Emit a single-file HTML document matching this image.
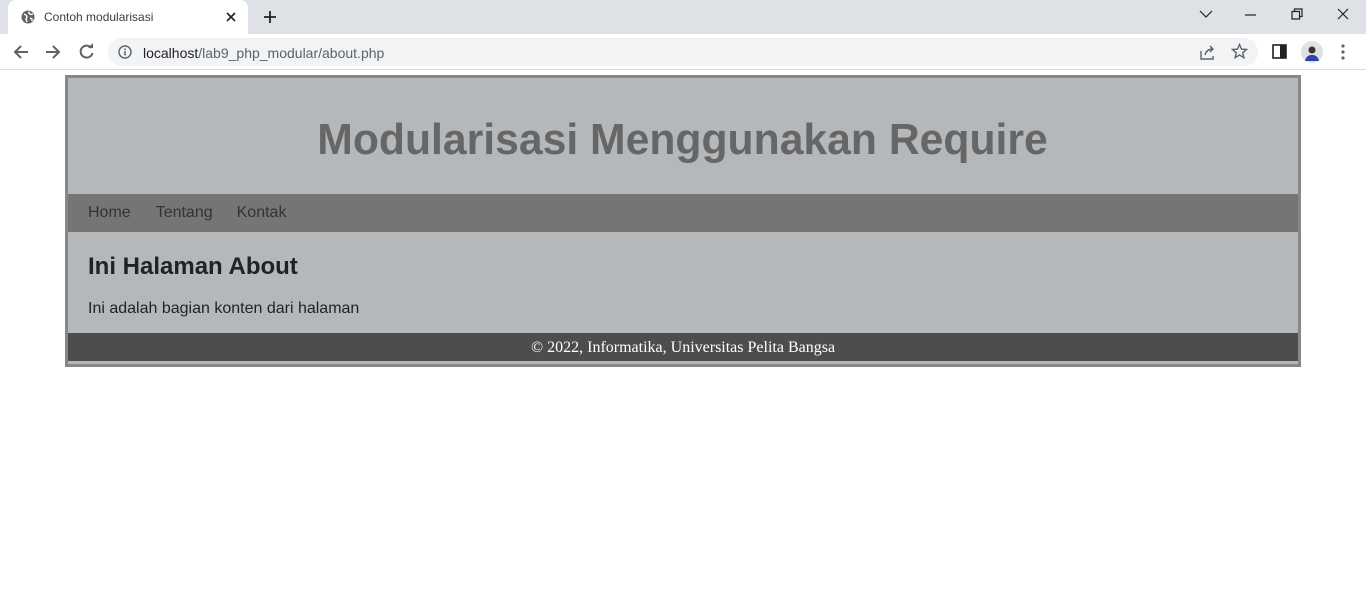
<!DOCTYPE html>
<html><head><meta charset="utf-8"><style>
*{margin:0;padding:0;box-sizing:border-box}
body{width:1366px;height:616px;background:#fff;font-family:"Liberation Sans",Arial,sans-serif;position:relative;overflow:hidden}
.tabbar{position:absolute;left:0;top:0;width:1366px;height:34px;background:#dee1e6}
.tab{position:absolute;left:8px;top:0;width:240px;height:34px;background:#fff;border-radius:8px 8px 0 0}
.tab .t{position:absolute;left:36px;top:10px;font-size:12px;color:#3c4043}
.toolbar{position:absolute;left:0;top:34px;width:1366px;height:36px;background:#fff;border-bottom:1px solid #dadce0}
.omni{position:absolute;left:108px;top:4px;width:1150px;height:28px;background:#f1f3f4;border-radius:14px}
.omni .u{position:absolute;left:35px;top:7px;font-size:14px;color:#5f6368}
.omni .u b{font-weight:normal;color:#202124}
svg{position:absolute}
.box{position:absolute;left:65px;top:75px;width:1236px;height:292px;border:3px solid #878787;background:#b5b8bb}
.hdr{height:116px;text-align:center}
.hdr h1{display:inline-block;font-size:44px;font-weight:bold;color:#666;margin-top:37px;line-height:50px;transform:scaleX(.97);transform-origin:center;white-space:nowrap;letter-spacing:0}
.nav{height:38px;background:#757575;padding-left:20px}
.nav a{display:inline-block;color:#333;font-size:16px;line-height:38px;margin-right:24px;text-decoration:none}
.nav a:first-child{margin-right:25px}
.content{height:101px;padding:21px 20px 0}
.content h2{font-size:24px;color:#222;line-height:28px}
.content p{font-size:16px;color:#222;margin-top:19px}
.ft{height:28px;background:#4d4d4d;color:#fff;text-align:center;font-family:"Liberation Serif",serif;font-size:16px;line-height:28px;padding-top:1px}
</style></head><body>
<div class="tabbar">
<div class="tab"><svg style="left:13px;top:10px" width="14" height="14" viewBox="0 0 14 14"><circle cx="7" cy="7" r="6.5" fill="#5f6368"/><path d="M3 4l2 1 1 2-1 2 1 3M8 1.5l0 2 2 1 2-.5M9 8l2 1 0 2" stroke="#fff" stroke-width="1.4" fill="none"/></svg><span class="t">Contoh modularisasi</span>
<svg style="left:218px;top:12px" width="10" height="10"><path d="M1 1l8 8M9 1l-8 8" stroke="#202124" stroke-width="1.6"/></svg></div>
<svg style="left:263px;top:10px" width="14" height="14"><path d="M7 1v12M1 7h12" stroke="#202124" stroke-width="1.8"/></svg>
<svg style="left:1199px;top:9px" width="14" height="10"><path d="M1 2l6 6 6-6" stroke="#202124" stroke-width="1.2" fill="none"/></svg>
<svg style="left:1245px;top:14px" width="12" height="2"><path d="M0 1h11" stroke="#202124" stroke-width="1.2"/></svg>
<svg style="left:1291px;top:8px" width="12" height="12"><path d="M1 3.5h7.5v7.5H1zM3.5 3.5V1h7.5v7.5H8.5" stroke="#202124" stroke-width="1.2" fill="none"/></svg>
<svg style="left:1337px;top:8px" width="12" height="12"><path d="M1 1l10 10M11 1L1 11" stroke="#202124" stroke-width="1.2"/></svg>
</div>
<div class="toolbar">
<svg style="left:13px;top:10px" width="16" height="16"><path d="M15 8H2M8 2L2 8l6 6" stroke="#5f6368" stroke-width="2" fill="none"/></svg>
<svg style="left:45px;top:10px" width="16" height="16"><path d="M1 8h13M8 2l6 6-6 6" stroke="#5f6368" stroke-width="2" fill="none"/></svg>
<svg style="left:78px;top:9px" width="17" height="17"><path d="M13.5 5A6 6 0 1 0 14.5 10" stroke="#5f6368" stroke-width="2" fill="none"/><path d="M10 5h5V0z" fill="#5f6368"/></svg>
<div class="omni"><svg style="left:10px;top:7px" width="14" height="14"><circle cx="7" cy="7" r="6" stroke="#5f6368" stroke-width="1.4" fill="none"/><path d="M7 6v4.5M7 3.5v1.5" stroke="#5f6368" stroke-width="1.5"/></svg><span class="u"><b>localhost</b>/lab9_php_modular/about.php</span>
<svg style="left:1091px;top:6px" width="17" height="16"><path d="M2 7v8h12v-3M6 11c1-4 4-6 8-6M11 2l3 3-3 3" stroke="#5f6368" stroke-width="1.4" fill="none"/></svg>
<svg style="left:1123px;top:5px" width="17" height="17"><path d="M8.5 1.5l2 4.6 5 .4-3.8 3.3 1.2 4.9-4.4-2.7-4.4 2.7 1.2-4.9L1.5 6.5l5-.4z" stroke="#5f6368" stroke-width="1.4" fill="none"/></svg></div>
<svg style="left:1272px;top:10px" width="15" height="15"><rect x="1" y="1" width="13" height="13" stroke="#202124" stroke-width="1.6" fill="none"/><rect x="8" y="1" width="6" height="13" fill="#202124"/></svg>
<svg style="left:1301px;top:7px" width="22" height="22"><circle cx="11" cy="11" r="11" fill="#dfe1e5"/><circle cx="11" cy="9" r="3.5" fill="#3a3030"/><path d="M4 20c1-5 4-6 7-6s6 1 7 6z" fill="#2747a8"/></svg>
<svg style="left:1341px;top:10px" width="4" height="16"><circle cx="2" cy="2" r="1.6" fill="#5f6368"/><circle cx="2" cy="8" r="1.6" fill="#5f6368"/><circle cx="2" cy="14" r="1.6" fill="#5f6368"/></svg>
</div>
<div class="box">
<div class="hdr"><h1>Modularisasi Menggunakan Require</h1></div>
<div class="nav"><a>Home</a><a>Tentang</a><a>Kontak</a></div>
<div class="content"><h2>Ini Halaman About</h2><p>Ini adalah bagian konten dari halaman</p></div>
<div class="ft">© 2022, Informatika, Universitas Pelita Bangsa</div>
</div>
</body></html>
